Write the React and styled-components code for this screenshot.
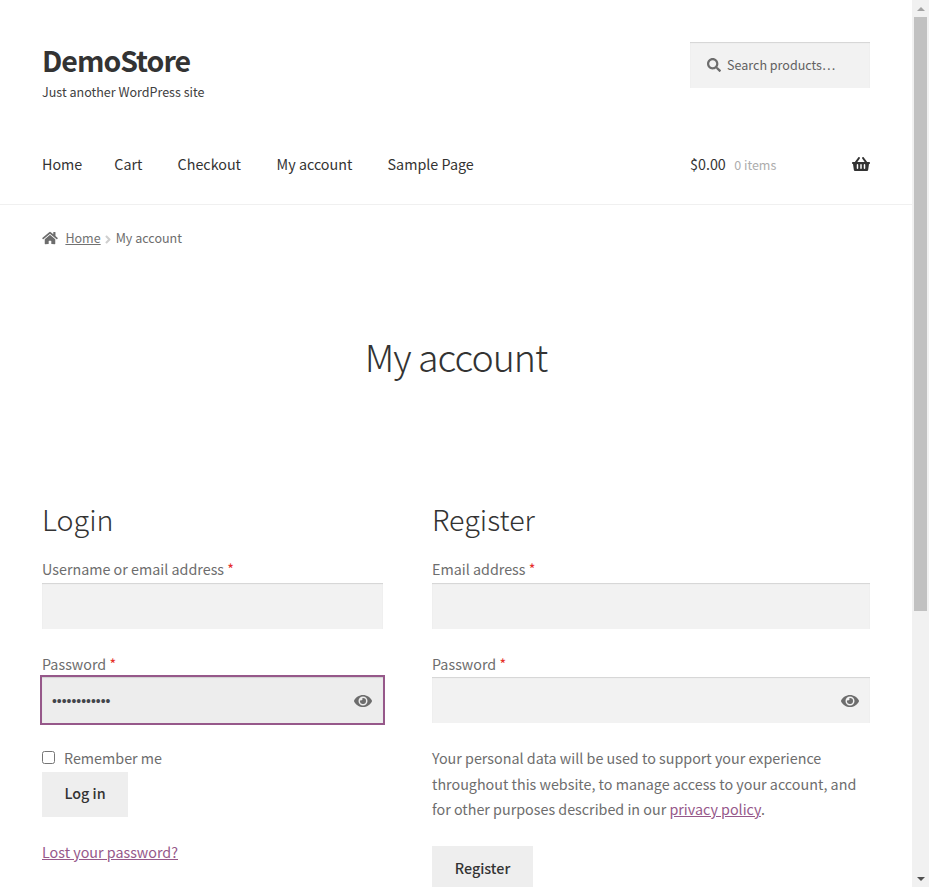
import React from "react";
import styled, { createGlobalStyle } from "styled-components";
import { FaSearch, FaHome, FaShoppingBasket, FaEye, FaAngleRight } from "react-icons/fa";

const GlobalStyle = createGlobalStyle`
  * { box-sizing: border-box; }
  body {
    margin: 0;
    background: #fff;
    overflow: hidden;
    color: #6d6d6d;
    font-family: "Noto Sans CJK SC", "Noto Sans", sans-serif;
    font-size: 14.32px;
    line-height: 26px;
  }
`;

const Window = styled.div`
  display: flex;
  width: 929px;
  height: 887px;
  overflow: hidden;
`;

const Page = styled.div`
  flex: 0 0 912px;
  height: 887px;
  overflow: hidden;
`;

const Header = styled.header`
  height: 205px;
  padding: 42px 42px 0;
  border-bottom: 1px solid #f0f0f0;
`;

const Masthead = styled.div`
  display: flex;
  justify-content: space-between;
  height: 101px;
`;

const SiteTitle = styled.h1`
  margin: 0;
  height: 38px;
  color: #333;
  font-size: 28.5px;
  font-weight: 700;
  line-height: 35px;
  letter-spacing: -1px;
`;

const Tagline = styled.p`
  margin: 0;
  color: #404040;
  font-size: 12.54px;
  line-height: 23px;
`;

const SearchForm = styled.form`
  display: flex;
  align-items: center;
  gap: 6.5px;
  width: 180px;
  height: 46px;
  padding: 0 0 0 16.5px;
  background: #f2f2f2;
  box-shadow: inset 0 1px 1px rgba(0, 0, 0, 0.125);
  font-size: 14px;
  color: #6d6d6d;
`;

const SearchInput = styled.input`
  width: 120px;
  padding: 0 0 2px;
  border: 0;
  outline: 0;
  background: transparent;
  font: 12.54px "Noto Sans CJK SC", sans-serif;
  &::placeholder { color: #616161; opacity: 1; }
`;

const NavBar = styled.div`
  display: flex;
  height: 42px;
  color: #333;
`;

const Nav = styled.nav`
  display: flex;
  flex: 0 0 648px;
`;

const NavLink = styled.a`
  flex: 0 0 ${(p) => p.$w}px;
  white-space: nowrap;
  line-height: 42px;
`;

const Cart = styled.div`
  display: flex;
  flex: 1;
  align-items: center;
  font-size: 18px;
`;

const Amount = styled.span`
  margin-right: 8.4px;
  font-size: 14.33px;
  line-height: 42px;
`;

const Count = styled.span`
  flex: 1;
  padding-top: 2px;
  color: #adadad;
  font-size: 12.54px;
  line-height: 42px;
`;

const Breadcrumb = styled.nav`
  display: flex;
  align-items: center;
  height: 66px;
  padding-left: 42px;
  font-size: 12.54px;
`;

const HomeIcon = styled(FaHome)`
  width: 16px;
  height: 14px;
  margin-right: 7.4px;
`;

const Crumb = styled.a`
  color: #727272;
  text-decoration: underline;
`;

const Separator = styled(FaAngleRight)`
  width: 8px;
  height: 13px;
  margin: 2px 3.4px 0 3.6px;
  color: #cfcfcf;
`;

const PageTitle = styled.h1`
  margin: 56px 0 0;
  height: 64px;
  color: #333;
  font-size: 37.5px;
  font-weight: 300;
  line-height: 58px;
  letter-spacing: -1px;
  text-align: center;
`;

const Columns = styled.main`
  display: grid;
  grid-template-columns: 341px 438px;
  column-gap: 49px;
  margin-top: 107px;
  padding-left: 42px;
`;

const Column = styled.section`
  display: flex;
  flex-direction: column;
  align-items: flex-start;
`;

const SectionTitle = styled.h2`
  margin: 0 0 14px;
  height: 44px;
  color: #333;
  font-size: 28.65px;
  font-weight: 300;
  line-height: 42px;
`;

const Field = styled.div`
  display: flex;
  flex-direction: column;
  width: 100%;
  height: ${(p) => p.$h}px;
`;

const Label = styled.label`
  flex: 1;
`;

const Required = styled.span`
  color: #e6302c;
`;

const InputBox = styled.div`
  display: flex;
  align-items: center;
  height: 46px;
  margin-bottom: 22px;
  padding: 0 11px 0 10px;
  background: ${(p) => (p.$focused ? "#ededed" : "#f2f2f2")};
  box-shadow: inset 0 1px 1px rgba(0, 0, 0, 0.125);
  outline: ${(p) => (p.$focused ? "2px solid #96588a" : "none")};
  color: #6d6d6d;
  font-size: 18px;
`;

const EyeIcon = styled(FaEye)`
  margin-top: 2px;
`;

const Input = styled.input`
  flex: 1;
  min-width: 0;
  padding: 2px 0 0;
  border: 0;
  outline: 0;
  background: transparent;
  color: #43454b;
  font: 13.9px "Liberation Sans", sans-serif;
`;

const Remember = styled.label`
  display: flex;
  align-items: center;
  height: 27px;
  padding-bottom: 1px;
`;

const Checkbox = styled.input`
  width: 13px;
  height: 13px;
  margin: 0 9px 2px 0;
`;

const Button = styled.button`
  width: ${(p) => p.$w}px;
  height: 45px;
  padding: 0 0 ${(p) => p.$lift}px;
  border: 0;
  background: #eee;
  color: #333;
  font: 500 14.33px "Noto Sans CJK SC", sans-serif;
`;

const Link = styled.a`
  color: #96588a;
  text-decoration: underline;
`;

const LostPassword = styled.p`
  margin: 22px 0 0;
`;

const Privacy = styled.p`
  margin: 0 0 24px;
  line-height: 25.6px;
  white-space: nowrap;
`;

const Scrollbar = styled.div`
  display: flex;
  flex: 0 0 17px;
  flex-direction: column;
  align-items: center;
  justify-content: space-between;
  padding: 7px 0 6px;
  background: #f1f1f1;
`;

const Thumb = styled.div`
  width: 13px;
  height: 594px;
  margin: 6px 0 auto;
  background: #c1c1c1;
`;

const Arrow = styled.div`
  width: 0;
  height: 0;
  border: solid transparent;
  border-width: ${(p) => (p.$up ? "0 4px 4px" : "4px 4px 0")};
  border-bottom-color: ${(p) => (p.$up ? "#a3a3a3" : "transparent")};
  border-top-color: ${(p) => (p.$up ? "transparent" : "#505050")};
`;

const navItems = [
  ["Home", 72.3],
  ["Cart", 63.3],
  ["Checkout", 99],
  ["My account", 111],
  ["Sample Page", 90],
];

function FormField({ label, type = "text", value = "", focused = false, height = 94 }) {
  return (
    <Field $h={height}>
      <Label>
        {label} <Required>*</Required>
      </Label>
      <InputBox $focused={focused}>
        <Input type={type} defaultValue={value} />
        {type === "password" && <EyeIcon />}
      </InputBox>
    </Field>
  );
}

export default function App() {
  return (
    <Window>
      <GlobalStyle />
      <Page>
        <Header>
          <Masthead>
            <div>
              <SiteTitle>DemoStore</SiteTitle>
              <Tagline>Just another WordPress site</Tagline>
            </div>
            <SearchForm>
              <FaSearch />
              <SearchInput placeholder="Search products…" />
            </SearchForm>
          </Masthead>
          <NavBar>
            <Nav>
              {navItems.map(([name, width]) => (
                <NavLink key={name} $w={width}>{name}</NavLink>
              ))}
            </Nav>
            <Cart>
              <Amount>$0.00</Amount>
              <Count>0 items</Count>
              <FaShoppingBasket />
            </Cart>
          </NavBar>
        </Header>
        <Breadcrumb>
          <HomeIcon />
          <Crumb>Home</Crumb>
          <Separator />
          <span>My account</span>
        </Breadcrumb>
        <PageTitle>My account</PageTitle>
        <Columns>
          <Column>
            <SectionTitle>Login</SectionTitle>
            <FormField label="Username or email address" height={95} />
            <FormField label="Password" type="password" value="wordpress123" focused />
            <Remember>
              <Checkbox type="checkbox" />
              Remember me
            </Remember>
            <Button $w={86} $lift={5}>Log in</Button>
            <LostPassword>
              <Link>Lost your password?</Link>
            </LostPassword>
          </Column>
          <Column>
            <SectionTitle>Register</SectionTitle>
            <FormField label="Email address" height={95} />
            <FormField label="Password" type="password" />
            <Privacy>
              Your personal data will be used to support your experience
              <br />
              throughout this website, to manage access to your account, and
              <br />
              for other purposes described in our <Link>privacy policy</Link>.
            </Privacy>
            <Button $w={101} $lift={1}>Register</Button>
          </Column>
        </Columns>
      </Page>
      <Scrollbar>
        <Arrow $up />
        <Thumb />
        <Arrow />
      </Scrollbar>
    </Window>
  );
}
